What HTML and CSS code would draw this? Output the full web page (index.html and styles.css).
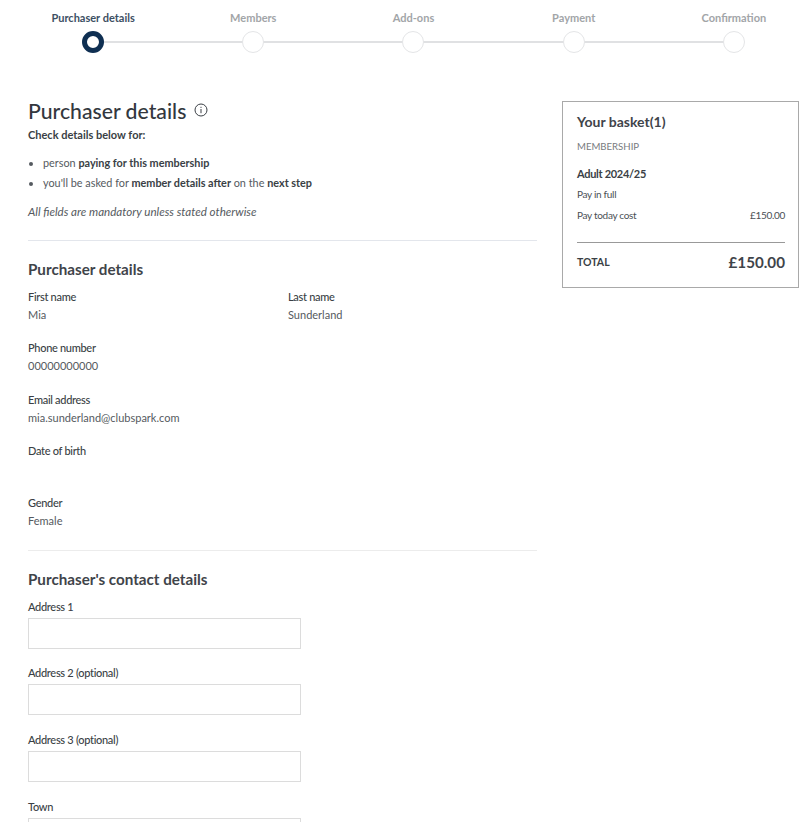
FILE: index.html
```html
<!DOCTYPE html>
<html lang="en">
<head>
<meta charset="utf-8">
<title>Purchaser details</title>
<link rel="stylesheet" href="styles.css">
</head>
<body>
<ol class="stepper">
  <li class="step step-active"><span class="step-label">Purchaser details</span><span class="step-dot"></span></li>
  <li class="step"><span class="step-label">Members</span><span class="step-dot"></span></li>
  <li class="step"><span class="step-label">Add-ons</span><span class="step-dot"></span></li>
  <li class="step"><span class="step-label">Payment</span><span class="step-dot"></span></li>
  <li class="step"><span class="step-label">Confirmation</span><span class="step-dot"></span></li>
</ol>
<div class="layout">
  <main class="main">
    <h1 class="title">Purchaser details
      <svg class="info" viewBox="0 0 14 14" width="14" height="14" aria-hidden="true"><circle cx="7" cy="7" r="6" fill="none" stroke="#3a3f45" stroke-width="1"/><rect x="6.5" y="6" width="1" height="4.2" fill="#3a3f45"/><rect x="6.5" y="3.8" width="1" height="1.1" fill="#3a3f45"/></svg>
    </h1>
    <p class="lead">Check details below for:</p>
    <ul class="notes">
      <li>person <b>paying for this membership</b></li>
      <li>you'll be asked for <b>member details after</b> on the <b>next step</b></li>
    </ul>
    <p class="mandatory">All fields are mandatory unless stated otherwise</p>
    <hr class="rule rule-first">
    <h2 class="section-title">Purchaser details</h2>
    <div class="field-row">
      <div class="field field-half"><div class="label">First name</div><div class="value">Mia</div></div>
      <div class="field field-half"><div class="label">Last name</div><div class="value">Sunderland</div></div>
    </div>
    <div class="field"><div class="label">Phone number</div><div class="value">00000000000</div></div>
    <div class="field"><div class="label">Email address</div><div class="value">mia.sunderland@clubspark.com</div></div>
    <div class="field"><div class="label">Date of birth</div><div class="value">&nbsp;</div></div>
    <div class="field"><div class="label">Gender</div><div class="value">Female</div></div>
    <hr class="rule rule-second">
    <h2 class="section-title">Purchaser's contact details</h2>
    <label class="input-group"><span class="input-label">Address 1</span><input class="input" type="text"></label>
    <label class="input-group"><span class="input-label">Address 2 (optional)</span><input class="input" type="text"></label>
    <label class="input-group"><span class="input-label">Address 3 (optional)</span><input class="input" type="text"></label>
    <label class="input-group"><span class="input-label">Town</span><input class="input" type="text"></label>
  </main>
  <aside class="basket">
    <h2 class="basket-title">Your basket(1)</h2>
    <div class="basket-kind">MEMBERSHIP</div>
    <div class="basket-item">Adult 2024/25</div>
    <div class="basket-line">Pay in full</div>
    <div class="basket-line basket-cost"><span>Pay today cost</span><span>£150.00</span></div>
    <div class="basket-total"><span class="total-label">TOTAL</span><span class="total-amount">£150.00</span></div>
  </aside>
</div>
</body>
</html>
```
FILE: styles.css
```css
html, body { margin: 0; padding: 0; height: 822px; overflow: hidden; background: #fff; }
body { font-family: Lato, "Open Sans", sans-serif; color: #3a3f45; font-size: 11px; }
.stepper { list-style: none; margin: 0 0 0 13px; padding: 11px 0 0; width: 801px; display: grid; grid-template-columns: repeat(5, 1fr); }
.step { display: flex; flex-direction: column; align-items: center; position: relative; }
.step-label { font-size: 11px; line-height: 13px; font-weight: 700; color: #a2a5a8; }
.step-active .step-label { color: #3d4f63; }
.step-dot { width: 22px; height: 22px; box-sizing: border-box; margin-top: 7px; border: 1.5px solid #e4e5e7; border-radius: 50%; background: #fff; position: relative; z-index: 1; }
.step-active .step-dot { border: 5px solid #0f2f52; }
.step:not(:last-child)::after { content: ""; position: absolute; left: 50%; width: 100%; top: 30px; height: 2px; background: #e0e1e3; }
.layout { display: flex; align-items: flex-start; padding: 44px 0 0 28px; }
.main { width: 509px; flex: none; }
.title { margin: 0; font-size: 21.2px; line-height: 26px; font-weight: 500; color: #33383e; display: flex; align-items: center; gap: 8px; padding-top: 1px; }
.info { margin-top: -2px; }
.lead { margin: 4px 0 0; font-size: 11px; line-height: 14px; font-weight: 700; }
.notes { margin: 11px 0 0; padding: 0 0 0 15px; font-size: 10.85px; line-height: 19.5px; color: #555a60; }
.notes b { color: #3a3f45; font-weight: 700; }
.mandatory { margin: 13px 0 0; font-size: 11.6px; line-height: 14px; font-style: italic; color: #555a60; }
.rule { border: 0; height: 1px; margin: 0; }
.rule-first { background: #e3e6ec; margin-top: 20.5px; }
.rule-second { background: #ececec; margin-top: 22px; }
.section-title { margin: 19px 0 0; font-size: 15.2px; line-height: 18px; font-weight: 700; color: #3f444a; }
.field-row { display: flex; }
.field { margin-top: 19.5px; }
.field-row .field { margin-top: 12px; }
.field-half { flex: 0 0 260px; }
.label { font-size: 11px; letter-spacing: -.3px; line-height: 14px; color: #3a3f45; font-weight: 500; }
.value { font-size: 11px; line-height: 14px; margin-top: 4px; color: #555a60; }
.input-group { display: block; margin-top: 17.7px; }
.section-title + .input-group { margin-top: 12px; }
.input-label { display: block; font-size: 11px; letter-spacing: -.3px; line-height: 14px; color: #3a3f45; font-weight: 500; margin-bottom: 4px; }
.input { display: block; width: 273px; height: 31px; box-sizing: border-box; border: 1px solid #dcdcdc; background: #fff; margin: 0; padding: 0 8px; }
.basket { margin: 4px 0 0 25px; width: 237px; box-sizing: border-box; border: 1px solid #a9a9a9; padding: 11px 13px 15px 14px; }
.basket-title { margin: 0; font-size: 14px; line-height: 18px; font-weight: 700; color: #3f444a; }
.basket-kind { margin-top: 9px; font-size: 9.6px; line-height: 14px; color: #777b80; }
.basket-item { margin-top: 13px; font-size: 11px; letter-spacing: -.3px; line-height: 14px; font-weight: 700; color: #3a3f45; }
.basket-line { margin-top: 6px; font-size: 10px; line-height: 14px; color: #4a4f55; letter-spacing: -.3px; }
.basket-cost { display: flex; justify-content: space-between; margin-top: 7px; }
.basket-total { display: flex; justify-content: space-between; align-items: center; margin-top: 20px; padding-top: 9px; border-top: 1px solid #999; }
.total-label { font-size: 10.5px; font-weight: 700; color: #3a3f45; }
.total-amount { font-size: 15.2px; line-height: 20px; font-weight: 700; color: #3f444a; }
```
